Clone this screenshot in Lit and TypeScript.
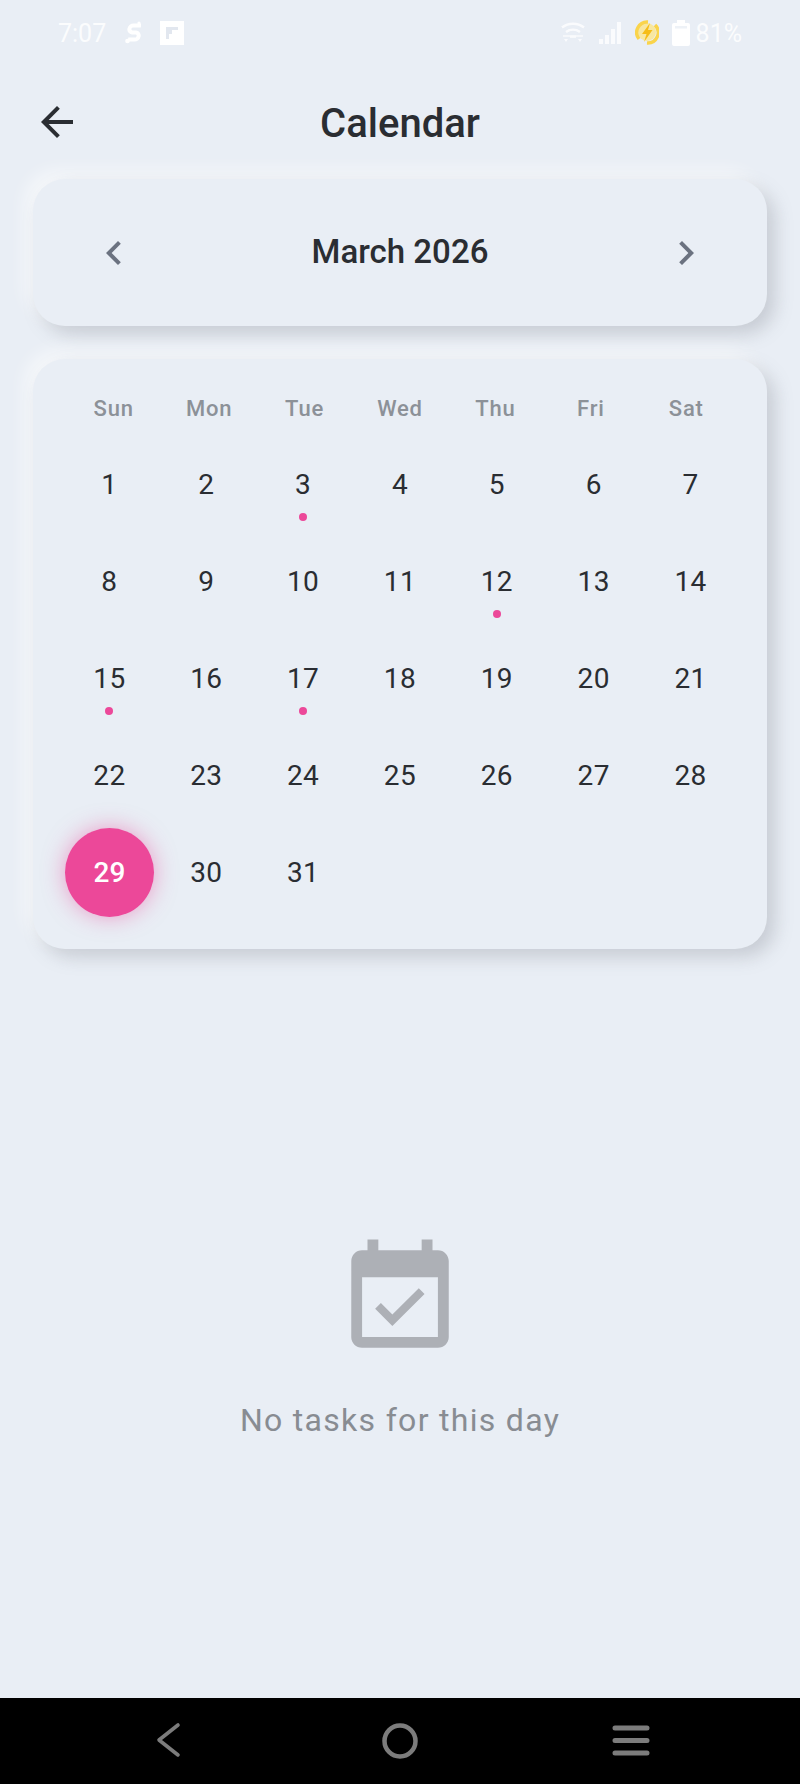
import { LitElement, html, css, svg } from "lit";
import { customElement } from "lit/decorators.js";
import { classMap } from "lit/directives/class-map.js";

const WEEKDAYS = ["Sun", "Mon", "Tue", "Wed", "Thu", "Fri", "Sat"];
const MARKED = [3, 12, 15, 17];
const SELECTED = 29;

const icon = (size: number, body: unknown) => html`<svg
  width=${size}
  height=${size}
  viewBox="0 0 24 24"
  fill="currentColor"
>
  ${body}
</svg>`;

@customElement("app-root")
export class AppRoot extends LitElement {
  static styles = css`
    :host {
      display: block;
      font-family: Roboto, "Liberation Sans", sans-serif;
      color: #2a2d32;
    }

    .page {
      height: 1784px;
      background: #e9eef5;
      display: flex;
      flex-direction: column;
      overflow: hidden;
    }

    /* Status bar */
    .status {
      height: 60px;
      flex: none;
      padding: 6px 58px 0;
      box-sizing: border-box;
      display: flex;
      justify-content: space-between;
      align-items: center;
      color: rgba(255, 255, 255, 0.85);
      font-size: 25px;
    }

    .status-left,
    .status-right {
      display: flex;
      align-items: center;
    }

    .status-left {
      gap: 19px;
    }

    .status-right {
      gap: 13px;
    }

    .status svg {
      display: block;
    }

    .pct {
      margin-left: -7px;
    }

    /* Header */
    .header {
      flex: none;
      height: 48px;
      margin: 38px 33px 33px;
      position: relative;
      display: flex;
      align-items: center;
      justify-content: center;
    }

    .back {
      position: absolute;
      left: 0;
      top: 0;
      color: #2a2d32;
      height: 48px;
    }

    .title {
      font-size: 40px;
      font-weight: 500;
      color: #2a2d32;
      position: relative;
      top: 1px;
    }

    /* Cards */
    .card {
      margin: 0 33px;
      border-radius: 32px;
      background: #e9eef5;
      box-shadow: 8px 8px 18px rgba(110, 115, 125, 0.28),
        -8px -8px 18px rgba(255, 255, 255, 0.6);
    }

    .month {
      flex: none;
      height: 147px;
      padding: 0 57px;
      box-sizing: border-box;
      display: flex;
      align-items: center;
      justify-content: space-between;
      color: #6b7280;
    }

    .month svg {
      display: block;
    }

    .month-label {
      font-size: 33px;
      font-weight: 500;
      color: #2a2d32;
      position: relative;
      top: -1px;
    }

    .calendar {
      flex: none;
      margin-top: 33px;
      padding: 28px;
      height: 590px;
      box-sizing: border-box;
    }

    .weekdays {
      display: grid;
      grid-template-columns: repeat(7, 1fr);
      padding: 0 5px;
      height: 49px;
    }

    .weekday {
      text-align: center;
      font-size: 22px;
      font-weight: 500;
      letter-spacing: 0.8px;
      line-height: 44px;
      color: #8c9198;
    }

    .days {
      display: grid;
      grid-template-columns: repeat(7, 1fr);
      grid-auto-rows: 97px;
    }

    .day {
      position: relative;
      margin: 4px;
      border-radius: 50%;
      display: flex;
      align-items: center;
      justify-content: center;
      font-size: 28px;
      letter-spacing: 0.4px;
      color: #2a2d32;
    }

    .day.selected {
      background: #ec4899;
      color: #fff;
      font-weight: 500;
      letter-spacing: 0;
      box-shadow: 0 0 22px rgba(236, 72, 153, 0.5);
    }

    .dot {
      position: absolute;
      left: 50%;
      bottom: 8px;
      width: 8px;
      height: 8px;
      margin-left: -4px;
      border-radius: 50%;
      background: #ec4899;
    }

    /* Empty state */
    .empty {
      flex: 1;
      display: flex;
      flex-direction: column;
      align-items: center;
      padding-top: 285px;
    }

    .empty svg {
      display: block;
      color: #adb0b6;
    }

    .empty-text {
      margin-top: 37px;
      font-size: 32px;
      letter-spacing: 1.3px;
      color: #888c92;
    }

    /* Android nav */
    .nav {
      flex: none;
      height: 86px;
      background: #000;
      display: grid;
      grid-template-columns: 232px 232px 232px;
      justify-content: center;
      align-items: center;
    }

    .nav svg {
      display: block;
      margin: 0 auto;
    }

    .nav-back {
      position: relative;
      left: 1px;
    }

    .nav-menu {
      position: relative;
      left: -1px;
    }
  `;

  private renderStatus() {
    return html`<div class="status">
      <div class="status-left">
        <span>7:07</span>
        <svg width="16" height="24" viewBox="0 0 16 24" fill="#fff">
          <path
            d="M14.5 4.5H7a3.2 3.2 0 0 0-.5 7h3.5a3.2 3.2 0 0 1-.5 7H3"
            fill="none"
            stroke="#fff"
            stroke-width="4"
            transform="skewX(-6) translate(2 0)"
          />
          <circle cx="2.5" cy="20" r="2.3" />
          <circle cx="14" cy="2" r="1.6" />
        </svg>
        <svg width="24" height="24" viewBox="0 0 24 24">
          <rect width="24" height="24" fill="#fff" />
          <path d="M6 6h12v3h-6v4H9v5H6z" fill="#e2e7ef" />
        </svg>
      </div>
      <div class="status-right">
        <svg width="24" height="24" viewBox="0 0 24 24" fill="none" stroke="#fff" stroke-width="2.6" opacity="0.8">
          <path d="M1 6.5c6.5-5 15.5-5 22 0" />
          <path d="M5 11c4.2-3 9.8-3 14 0" />
          <path d="M2 15h7M15 15h7" stroke-width="2" opacity="0.7" />
          <path d="M9 15.5h6" />
          <path d="M3 18h4l-2 3zM17 18h4l-2 3z" fill="#fff" stroke="none" />
        </svg>
        <svg width="24" height="24" viewBox="0 0 24 24" fill="#fff" opacity="0.8">
          <rect x="1" y="18" width="4" height="5" />
          <rect x="7" y="14" width="4" height="9" />
          <rect x="13" y="8" width="4" height="15" />
          <rect x="19" y="1" width="4" height="22" />
        </svg>
        <svg width="24" height="26" viewBox="0 0 24 26">
          <circle cx="12" cy="12" r="9" fill="#f8e7a0" />
          <path d="M4 19A10.5 10.5 0 0 1 13 2" fill="none" stroke="#fad44b" stroke-width="3.4" />
          <path d="M20 5a10.5 10.5 0 0 1-8 18" fill="none" stroke="#fad44b" stroke-width="3.4" />
          <path d="M15 3 7 14h4.5L9 22l8.5-12H13l2-7z" fill="#f6bd16" />
        </svg>
        <svg width="18" height="26" viewBox="0 0 18 26" fill="#fff">
          <path d="M5 0h8v3h3a2 2 0 0 1 2 2v19a2 2 0 0 1-2 2H2a2 2 0 0 1-2-2V5a2 2 0 0 1 2-2h3z" />
          <rect x="3" y="6" width="12" height="2.5" fill="#eef2f7" />
        </svg>
        <span class="pct">81%</span>
      </div>
    </div>`;
  }

  private renderDays() {
    const cells = [];
    for (let d = 1; d <= 31; d++) {
      const classes = { day: true, selected: d === SELECTED };
      cells.push(html`<div class=${classMap(classes)}>
        ${d}${MARKED.includes(d) ? html`<span class="dot"></span>` : ""}
      </div>`);
    }
    return cells;
  }

  render() {
    return html`<div class="page">
      ${this.renderStatus()}
      <div class="header">
        <div class="back">
          ${icon(48, svg`<path d="M20 11H7.83l5.59-5.59L12 4l-8 8 8 8 1.41-1.41L7.83 13H20v-2z" />`)}
        </div>
        <span class="title">Calendar</span>
      </div>

      <div class="card month">
        ${icon(48, svg`<path d="M15.41 7.41L14 6l-6 6 6 6 1.41-1.41L10.83 12z" />`)}
        <span class="month-label">March 2026</span>
        ${icon(48, svg`<path d="M10 6L8.59 7.41 13.17 12l-4.58 4.59L10 18l6-6z" />`)}
      </div>

      <div class="card calendar">
        <div class="weekdays">
          ${WEEKDAYS.map((w) => html`<div class="weekday">${w}</div>`)}
        </div>
        <div class="days">${this.renderDays()}</div>
      </div>

      <div class="empty">
        ${icon(130, svg`<path d="M16.53 11.06L15.47 10l-4.88 4.88-2.12-2.12-1.06 1.06L10.59 17l5.94-5.94zM19 3h-1V1h-2v2H8V1H6v2H5c-1.11 0-1.99.9-1.99 2L3 19c0 1.1.89 2 2 2h14c1.1 0 2-.9 2-2V5c0-1.1-.9-2-2-2zm0 16H5V8h14v11z" />`)}
        <div class="empty-text">No tasks for this day</div>
      </div>

      <div class="nav">
        <svg class="nav-back" width="40" height="40" viewBox="0 0 40 40" fill="none" stroke="#7c7c7c" stroke-width="3.6" stroke-linecap="round" stroke-linejoin="round">
          <path d="M29 4 10 19l19 15" />
        </svg>
        <svg width="40" height="40" viewBox="0 0 40 40" fill="none" stroke="#7c7c7c" stroke-width="4.5">
          <circle cx="20" cy="20" r="15.5" />
        </svg>
        <svg class="nav-menu" width="40" height="40" viewBox="0 0 40 40" fill="none" stroke="#7c7c7c" stroke-width="5" stroke-linecap="round">
          <path d="M4 7h32M4 19.5h32M4 32h32" />
        </svg>
      </div>
    </div>`;
  }
}
